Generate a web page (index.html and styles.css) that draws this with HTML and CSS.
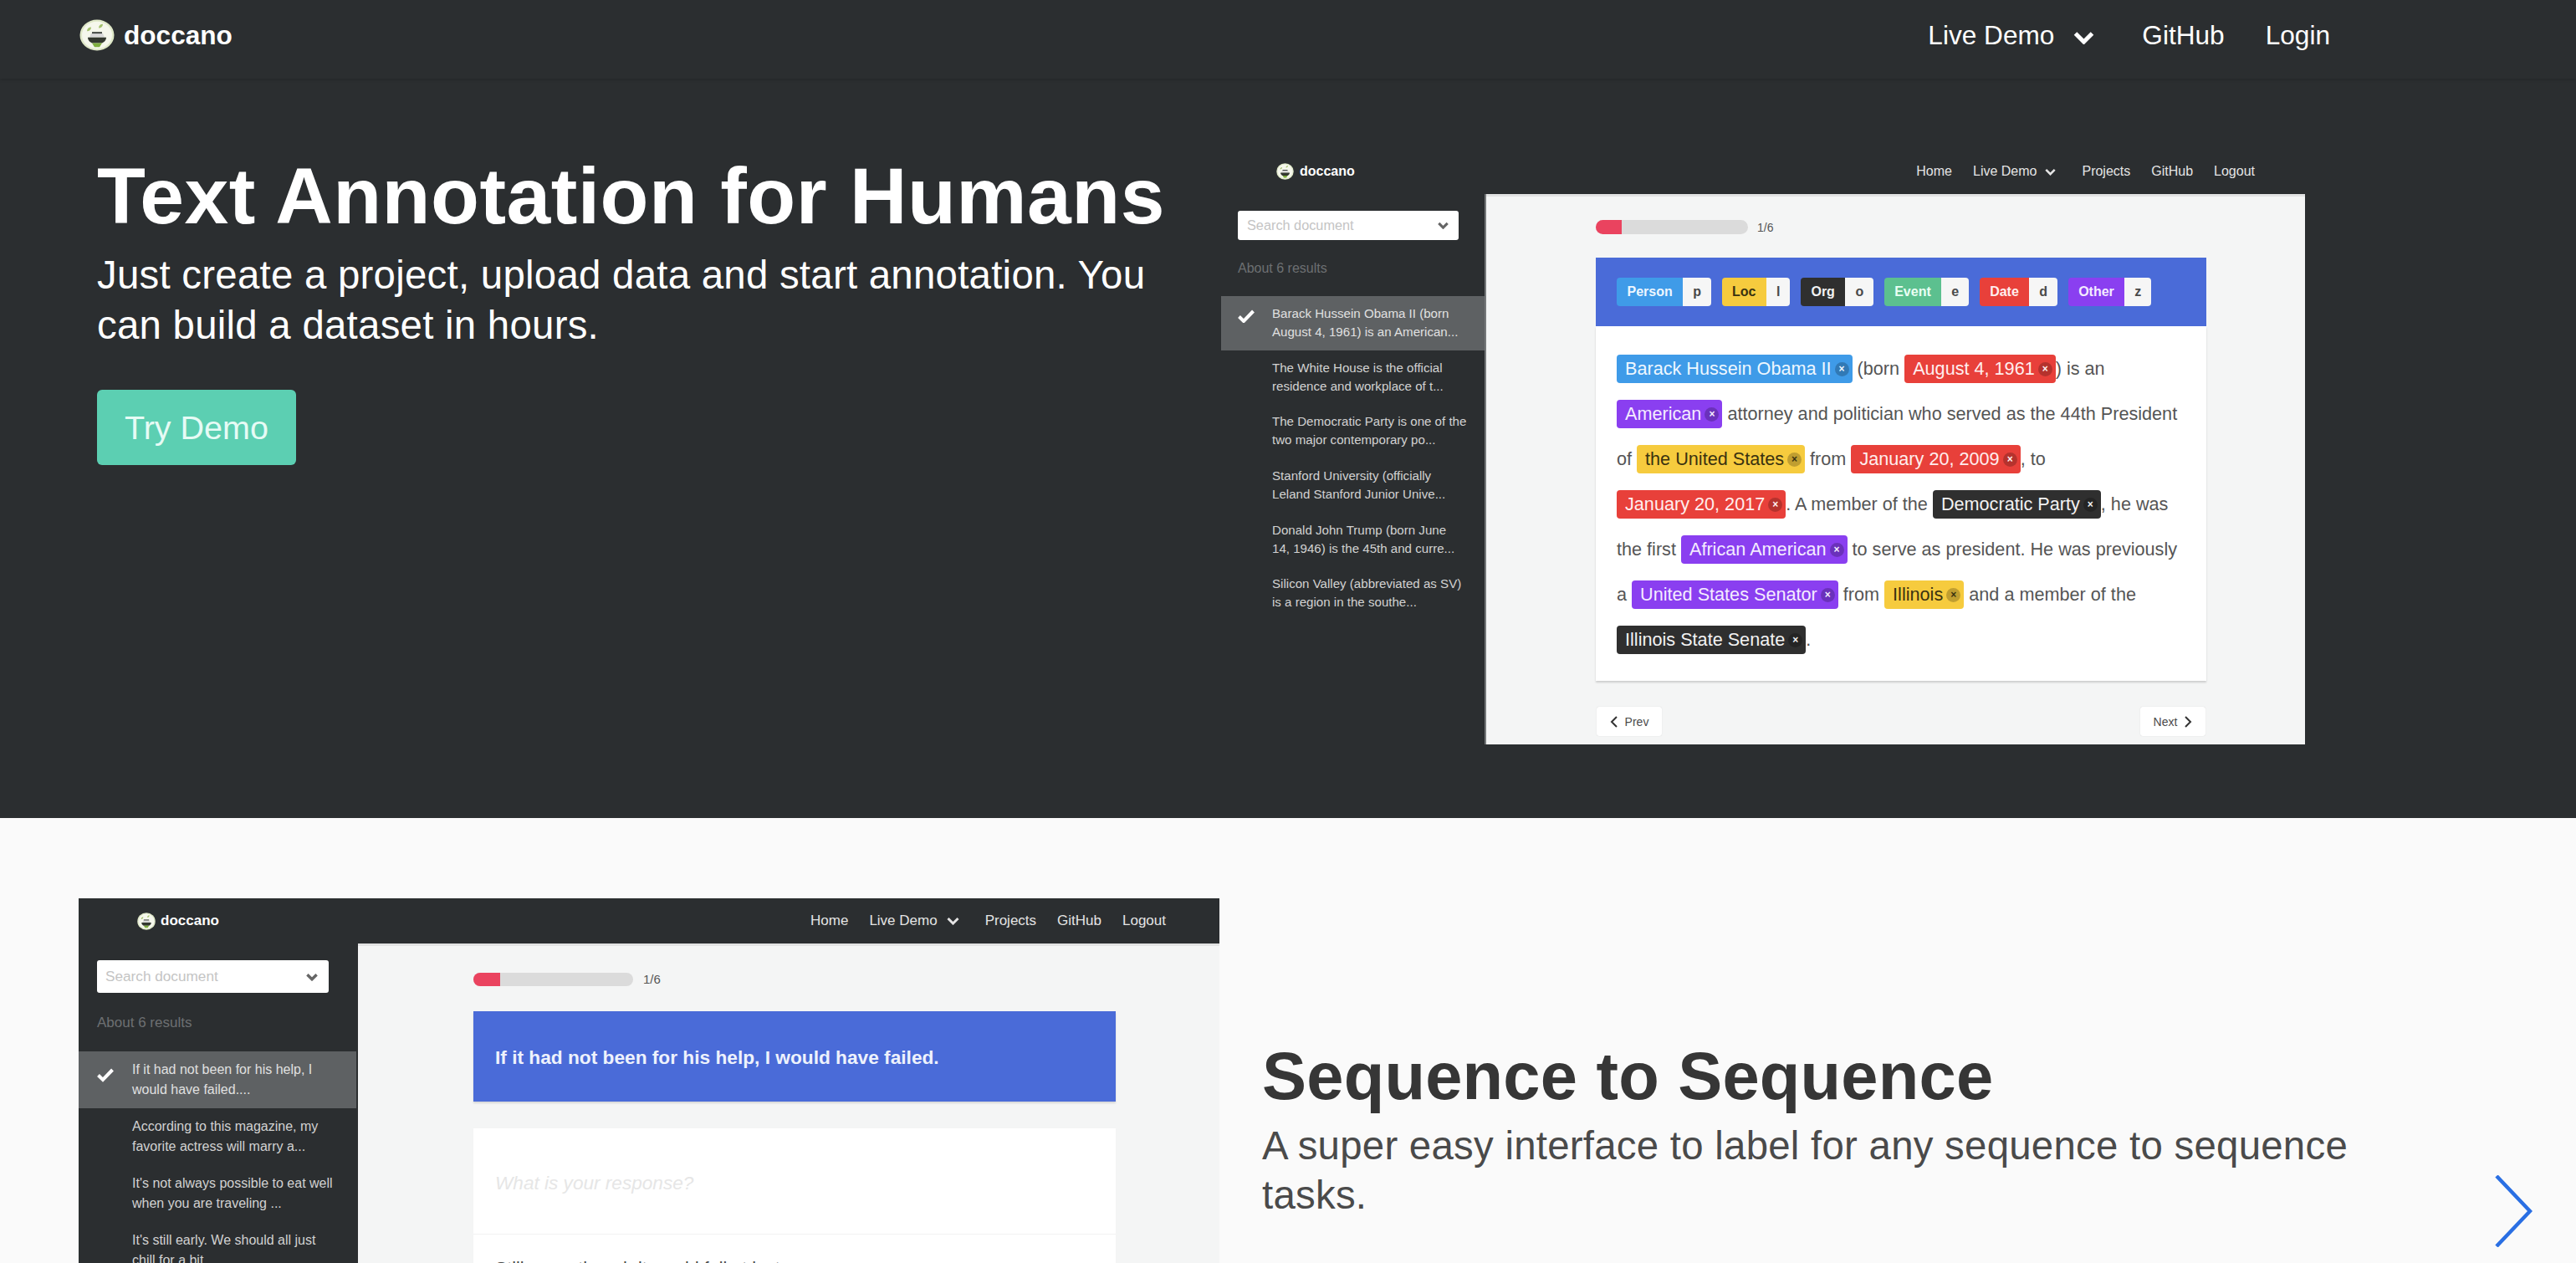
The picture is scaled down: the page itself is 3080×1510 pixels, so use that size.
FILE: index.html
```html
<!DOCTYPE html>
<html lang="en">
<head>
  <meta charset="UTF-8">
  <title>doccano</title>
  <link rel="stylesheet" href="styles.css">
</head>
<body>

  <nav class="topbar">
    <a class="brand">
      <svg class="logo logo-big" viewBox="0 0 42 40" preserveAspectRatio="none"><use href="#logo-art"/></svg>
      <span>doccano</span>
    </a>
    <div class="topbar-links">
      <a class="drop">Live Demo
        <svg class="chev" viewBox="0 0 25 16"><path d="M2.500 3 12.500 13 22.500 3"/></svg>
      </a>
      <a>GitHub</a>
      <a>Login</a>
    </div>
  </nav>

  <section class="hero">
    <div class="hero-copy">
      <h1>Text Annotation for Humans</h1>
      <p>Just create a project, upload data and start annotation. You can build a dataset in hours.</p>
      <a class="btn-demo">Try Demo</a>
    </div>

    <div class="shot shot-ner">
      <div class="shot-nav">
        <a class="brand">
          <svg class="logo" viewBox="0 0 42 40"><use href="#logo-art"/></svg>
          <span>doccano</span>
        </a>
        <div class="shot-links">
          <a>Home</a>
          <a class="drop">Live Demo
            <svg class="chev" viewBox="0 0 25 16"><path d="M2.500 3 12.500 13 22.500 3"/></svg>
          </a>
          <a>Projects</a>
          <a>GitHub</a>
          <a>Logout</a>
        </div>
      </div>
      <div class="shot-body">
        <aside class="side">
          <div class="search">Search document
            <svg class="chev" viewBox="0 0 25 16"><path d="M2.500 3 12.500 13 22.500 3"/></svg>
          </div>
          <div class="count">About 6 results</div>
          <ul class="docs">
            <li class="active">
              <svg class="tick" viewBox="0 0 20 16"><path d="M1.500 8.500 7 14 18.500 2"/></svg>
              Barack Hussein Obama II (born<br>August 4, 1961) is an American...
            </li>
            <li>The White House is the official<br>residence and workplace of t...</li>
            <li>The Democratic Party is one of the<br>two major contemporary po...</li>
            <li>Stanford University (officially<br>Leland Stanford Junior Unive...</li>
            <li>Donald John Trump (born June<br>14, 1946) is the 45th and curre...</li>
            <li>Silicon Valley (abbreviated as SV)<br>is a region in the southe...</li>
          </ul>
        </aside>
        <main class="work">
          <div class="progress">
            <div class="bar"><div class="bar-fill"></div></div>
            <span>1/6</span>
          </div>
          <div class="label-head">
            <span class="tag"><b class="c-blue">Person</b><i>p</i></span>
            <span class="tag"><b class="c-yellow">Loc</b><i>l</i></span>
            <span class="tag"><b class="c-black">Org</b><i>o</i></span>
            <span class="tag"><b class="c-green">Event</b><i>e</i></span>
            <span class="tag"><b class="c-red">Date</b><i>d</i></span>
            <span class="tag"><b class="c-purple">Other</b><i>z</i></span>
          </div>
          <p class="annotated">
            <span class="chip c-blue">Barack Hussein Obama II<em>×</em></span> (born <span class="chip c-red">August 4, 1961<em>×</em></span>) is an<br>
            <span class="chip c-purple">American<em>×</em></span> attorney and politician who served as the 44th President<br>
            of <span class="chip c-yellow">the United States<em>×</em></span> from <span class="chip c-red">January 20, 2009<em>×</em></span>, to<br>
            <span class="chip c-red">January 20, 2017<em>×</em></span>. A member of the <span class="chip c-black">Democratic Party<em>×</em></span>, he was<br>
            the first <span class="chip c-purple">African American<em>×</em></span> to serve as president. He was previously<br>
            a <span class="chip c-purple">United States Senator<em>×</em></span> from <span class="chip c-yellow">Illinois<em>×</em></span> and a member of the<br>
            <span class="chip c-black">Illinois State Senate<em>×</em></span>.
          </p>
          <div class="pager">
            <a><svg viewBox="0 0 10 16"><path d="M8 2 2 8 8 14"/></svg>Prev</a>
            <a>Next<svg viewBox="0 0 10 16"><path d="M2 2 8 8 2 14"/></svg></a>
          </div>
        </main>
      </div>
    </div>
  </section>

  <section class="feature">
    <div class="shot shot-seq">
      <div class="shot-nav">
        <a class="brand">
          <svg class="logo" viewBox="0 0 42 40"><use href="#logo-art"/></svg>
          <span>doccano</span>
        </a>
        <div class="shot-links">
          <a>Home</a>
          <a class="drop">Live Demo
            <svg class="chev" viewBox="0 0 25 16"><path d="M2.500 3 12.500 13 22.500 3"/></svg>
          </a>
          <a>Projects</a>
          <a>GitHub</a>
          <a>Logout</a>
        </div>
      </div>
      <div class="shot-body">
        <aside class="side">
          <div class="search">Search document
            <svg class="chev" viewBox="0 0 25 16"><path d="M2.500 3 12.500 13 22.500 3"/></svg>
          </div>
          <div class="count">About 6 results</div>
          <ul class="docs">
            <li class="active">
              <svg class="tick" viewBox="0 0 20 16"><path d="M1.500 8.500 7 14 18.500 2"/></svg>
              If it had not been for his help, I<br>would have failed....
            </li>
            <li>According to this magazine, my<br>favorite actress will marry a...</li>
            <li>It's not always possible to eat well<br>when you are traveling ...</li>
            <li>It's still early. We should all just<br>chill for a bit...</li>
          </ul>
        </aside>
        <main class="work">
          <div class="progress">
            <div class="bar"><div class="bar-fill"></div></div>
            <span>1/6</span>
          </div>
          <div class="source">If it had not been for his help, I would have failed.</div>
          <div class="answer">
            <div class="answer-input">What is your response?</div>
            <div class="answer-row">Still, even though it would fail at last.</div>
          </div>
        </main>
      </div>
    </div>

    <div class="feature-copy">
      <h2>Sequence to Sequence</h2>
      <p>A super easy interface to label for any sequence to sequence tasks.</p>
    </div>

    <a class="next-arrow">
      <svg viewBox="0 0 45 86"><path d="M2 1 42 43 2 85"/></svg>
    </a>
  </section>

  <!-- logo, shared by the three navbars -->
  <svg class="sprite" width="0" height="0">
    <symbol id="logo-art" viewBox="0 0 42 40">
      <ellipse cx="21" cy="20" rx="20.500" ry="19.500" fill="#dfe8c8"/>
      <ellipse cx="21" cy="20" rx="18" ry="17" fill="#f5f7ec"/>
      <path d="M9 15c0-3 2-5 5-5 0 3-2 5-5 5zM23 11c0-3 2-5 5-5 0 3-2 5-5 5z" fill="#a3c16c"/>
      <path d="M14 18h14l2 5H12z" fill="#d9d9d9"/>
      <path d="M15 16h12v2H15z" fill="#3b3f3c"/>
      <path d="M10 23h22c0 4-3 6-5 7H15c-2-1-5-3-5-7z" fill="#33382f"/>
      <path d="M15 30h12l-3 5h-6z" fill="#7fae3f"/>
    </symbol>
  </svg>

</body>
</html>
```

FILE: styles.css
```css
html, body {
  margin: 0;
  height: 1510px;
  overflow: hidden;
}
body {
  font-family: "Liberation Sans", Arial, sans-serif;
  background-color: #fafafa;
}
a {
  color: inherit;
  text-decoration: none;
}
.sprite {
  position: absolute;
}

/* top navbar */
.topbar {
  height: 94px;
  box-sizing: border-box;
  display: flex;
  align-items: center;
  justify-content: space-between;
  padding: 0 294px 10px 95px;
  background-color: #2b2e30;
  color: #fff;
  font-size: 31.6px;
  box-shadow: 0 2px 3px rgba(0, 0, 0, 0.12);
  position: relative;
}
.brand {
  display: flex;
  align-items: center;
  font-weight: bold;
}
.logo {
  display: block;
}
.logo-big {
  width: 42px;
  height: 38px;
  margin-right: 11px;
}
.topbar-links {
  display: flex;
  align-items: center;
  gap: 49px;
}
.drop {
  display: flex;
  align-items: center;
}
.chev {
  display: block;
  fill: none;
  stroke: currentColor;
  stroke-width: 5;
}
.topbar .chev {
  width: 25px;
  height: 16px;
  margin: 6px 8px 0 23px;
}

/* hero */
.hero {
  height: 884px;
  box-sizing: border-box;
  display: flex;
  padding: 84px 0 0 116px;
  background-color: #2b2e30;
}
.hero-copy {
  width: 1344px;
  flex: none;
  padding-top: 3px;
  color: #fff;
}
.hero-copy h1 {
  margin: 0;
  font-size: 94.8px;
  line-height: 107px;
  font-weight: bold;
  letter-spacing: 0.5px;
}
.hero-copy p {
  margin: 11px 0 47px;
  width: 1290px;
  font-size: 47.400px;
  line-height: 60px;
  letter-spacing: 0.25px;
}
.btn-demo {
  display: block;
  width: 238px;
  height: 90px;
  line-height: 90px;
  text-align: center;
  font-size: 39.500px;
  color: #e6fbf5;
  background-color: #5ccfb2;
  border-radius: 6px;
}

/* product screenshots */
.shot {
  flex: none;
  overflow: hidden;
}
.shot-nav {
  height: 54px;
  display: flex;
  align-items: center;
  justify-content: space-between;
  background-color: #2b2e30;
  color: #e4e4e4;
}
.shot-nav .brand {
  color: #fff;
}
.shot-links {
  display: flex;
  align-items: center;
}
.shot-body {
  display: flex;
}
.side {
  flex: none;
  box-sizing: border-box;
  background-color: #2b2e30;
}
.search {
  display: flex;
  align-items: center;
  justify-content: space-between;
  box-sizing: border-box;
  background-color: #fff;
  border-radius: 3px;
  color: #c4c4c4;
}
.search .chev {
  color: #666;
  stroke-width: 6;
}
.count {
  color: #6d7072;
}
.docs {
  list-style: none;
  margin: 0;
  padding: 0;
  color: #d2d2d2;
}
.docs li {
  position: relative;
  box-sizing: border-box;
}
.docs li.active {
  background-color: #5e6163;
  color: #e0e0e0;
}
.tick {
  position: absolute;
  fill: none;
  stroke: #fff;
  stroke-width: 4;
}
.work {
  flex: 1;
  background-color: #f4f5f5;
  border-top: 3px solid #e2e3e3;
}
.progress {
  display: flex;
  align-items: center;
  color: #555;
}
.bar {
  background-color: #dbdbdb;
  overflow: hidden;
  border-radius: 9px;
}
.bar-fill {
  height: 100%;
  background-color: #ea435f;
}

/* sequence labeling shot */
.shot-ner {
  width: 1296px;
}
.shot-ner .shot-nav {
  padding: 0 60px 0 66px;
  font-size: 16px;
}
.shot-ner .logo {
  width: 21px;
  height: 20px;
  margin-right: 7px;
}
.shot-ner .shot-links {
  gap: 25px;
}
.shot-ner .drop .chev {
  width: 13px;
  height: 9px;
  margin-left: 10px;
  margin-right: 6px;
}
.shot-ner .shot-body {
  height: 658px;
}
.shot-ner .side {
  width: 317px;
  border-right: 2px solid #75787a;
}
.shot-ner .search {
  width: 264px;
  height: 35px;
  margin: 20px 0 0 20px;
  padding: 0 12px 0 11px;
  font-size: 16.300px;
}
.shot-ner .search .chev {
  width: 13px;
  height: 9px;
}
.shot-ner .count {
  margin: 25px 0 24px 20px;
  font-size: 16px;
}
.shot-ner .docs li {
  height: 64.700px;
  width: 315px;
  padding: 10px 0 0 61px;
  font-size: 15.100px;
  line-height: 22px;
}
.shot-ner .tick {
  left: 20px;
  top: 16px;
  width: 20px;
  height: 16px;
}
.shot-ner .work {
  padding: 28px 0 0 131px;
}
.shot-ner .progress {
  gap: 11px;
  font-size: 14px;
}
.shot-ner .bar {
  width: 182px;
  height: 17px;
}
.shot-ner .bar-fill {
  width: 31px;
}
.label-head {
  box-sizing: border-box;
  width: 730px;
  height: 82px;
  margin-top: 28px;
  padding-top: 24px;
  display: flex;
  background-color: #4a6bd8;
}
.tag {
  display: flex;
  height: 34px;
  margin-left: 12.500px;
  font-size: 16px;
  line-height: 34px;
  font-weight: bold;
  border-radius: 4px;
  overflow: hidden;
}
.tag:first-child {
  margin-left: 25px;
}
.tag b {
  padding: 0 12.500px;
}
.tag i {
  padding: 0 12px;
  font-style: normal;
  text-align: center;
  background-color: #f6f6f6;
  color: #4a4a4a;
}
.c-blue { background-color: #3f9be8; color: #eef7ff; }
.c-yellow { background-color: #f6cb3e; color: #3a3210; }
.c-black { background-color: #2f2f2f; color: #f2f2f2; }
.c-green { background-color: #5cc08f; color: #eafff4; }
.c-red { background-color: #e8403a; color: #ffeeee; }
.c-purple { background-color: #8a3ff0; color: #f4ecff; }

.annotated {
  box-sizing: border-box;
  width: 730px;
  height: 424px;
  margin: 0;
  padding: 24px 0 0 25px;
  background-color: #fff;
  box-shadow: 0 2px 2px rgba(0, 0, 0, 0.16);
  color: #555;
  font-size: 21.650px;
  line-height: 54px;
  white-space: nowrap;
}
.chip {
  display: inline-flex;
  align-items: center;
  height: 34px;
  line-height: 34px;
  padding: 0 4px 0 10px;
  border-radius: 4px;
}
.chip em {
  width: 17px;
  height: 17px;
  margin-left: 4px;
  border-radius: 50%;
  background-color: rgba(0, 0, 0, 0.22);
  font-size: 12px;
  line-height: 17px;
  font-style: normal;
  font-weight: bold;
  text-align: center;
}
.pager {
  width: 728px;
  margin: 31px 0 0 1px;
  display: flex;
  justify-content: space-between;
}
.pager a {
  width: 78px;
  height: 35px;
  display: flex;
  align-items: center;
  justify-content: center;
  gap: 8px;
  background-color: #fff;
  border-radius: 3px;
  box-shadow: 0 0 1px rgba(0, 0, 0, 0.2);
  color: #4a4a4a;
  font-size: 14px;
}
.pager svg {
  width: 10px;
  height: 16px;
  fill: none;
  stroke: #333;
  stroke-width: 2;
}

/* lower section */
.feature {
  height: 532px;
  box-sizing: border-box;
  display: flex;
  padding: 96px 0 0 94px;
  overflow: hidden;
  position: relative;
  background-color: #fafafa;
}
.shot-seq {
  width: 1364px;
}
.shot-seq .shot-nav {
  padding: 0 64px 0 70px;
  font-size: 17px;
}
.shot-seq .logo {
  width: 22px;
  height: 21px;
  margin-right: 6px;
}
.shot-seq .shot-links {
  gap: 25px;
}
.shot-seq .drop .chev {
  width: 15px;
  height: 10px;
  margin-left: 11px;
  margin-right: 6px;
}
.shot-seq .side {
  width: 334px;
}
.shot-seq .search {
  width: 277px;
  height: 39px;
  margin: 20px 0 0 22px;
  padding: 0 13px 0 10px;
  font-size: 17.200px;
}
.shot-seq .search .chev {
  width: 14px;
  height: 10px;
}
.shot-seq .count {
  margin: 26px 0 24px 22px;
  font-size: 17px;
}
.shot-seq .docs li {
  width: 332px;
  height: 68.300px;
  padding: 9.500px 0 0 64px;
  font-size: 16px;
  line-height: 24px;
}
.shot-seq .tick {
  left: 22px;
  top: 17px;
  width: 20px;
  height: 22px;
}
.shot-seq .work {
  padding: 31px 0 0 138px;
}
.shot-seq .progress {
  gap: 12px;
  font-size: 15px;
}
.shot-seq .bar {
  width: 191px;
  height: 16px;
}
.shot-seq .bar-fill {
  width: 32px;
}
.source {
  box-sizing: border-box;
  width: 768px;
  height: 108px;
  margin-top: 30px;
  padding-left: 26px;
  line-height: 110px;
  font-size: 22.700px;
  font-weight: bold;
  color: #eef2fc;
  background-color: #4a6bd8;
  box-shadow: 0 2px 2px rgba(0, 0, 0, 0.12);
}
.answer {
  width: 768px;
  margin-top: 32px;
  background-color: #fff;
  font-size: 21.500px;
}
.answer-input {
  box-sizing: border-box;
  height: 127px;
  padding: 53px 0 0 26px;
  border-bottom: 1px solid #f2f2f2;
  font-size: 22.600px;
  font-style: italic;
  color: #e6e6e6;
}
.answer-row {
  padding: 29px 0 0 26px;
  color: #4a4a4a;
}

.feature-copy {
  padding: 168px 0 0 51px;
}
.feature-copy h2 {
  margin: 0;
  font-size: 79.500px;
  line-height: 90px;
  font-weight: bold;
  letter-spacing: 0.2px;
  color: #363636;
}
.feature-copy p {
  margin: 8px 0 0;
  width: 1320px;
  font-size: 47.400px;
  line-height: 59px;
  letter-spacing: 0.25px;
  color: #4a4a4a;
}
.next-arrow {
  position: absolute;
  left: 2983px;
  top: 427px;
  width: 45px;
  height: 86px;
}
.next-arrow svg {
  display: block;
  width: 45px;
  height: 86px;
  fill: none;
  stroke: #2a6fe3;
  stroke-width: 4.500;
}
```
